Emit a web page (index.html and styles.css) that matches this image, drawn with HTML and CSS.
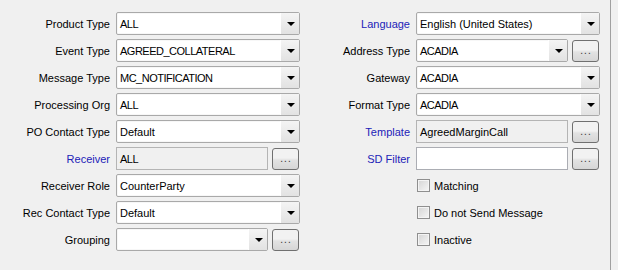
FILE: index.html
```html
<!DOCTYPE html>
<html lang="en">
<head>
    <meta charset="UTF-8">
    <title>Message Config</title>
    <link rel="stylesheet" href="styles.css">
</head>
<body>
    <div class="panel">
        <div class="form left">
            <label class="lbl">Product Type</label>
            <div class="combo"><span class="caps">ALL</span><i class="arrow"></i></div>

            <label class="lbl">Event Type</label>
            <div class="combo"><span class="caps">AGREED_COLLATERAL</span><i class="arrow"></i></div>

            <label class="lbl">Message Type</label>
            <div class="combo"><span class="caps">MC_NOTIFICATION</span><i class="arrow"></i></div>

            <label class="lbl">Processing Org</label>
            <div class="combo"><span class="caps">ALL</span><i class="arrow"></i></div>

            <label class="lbl">PO Contact Type</label>
            <div class="combo"><span>Default</span><i class="arrow"></i></div>

            <label class="lbl link">Receiver</label>
            <div class="pair">
                <div class="text ro caps">ALL</div>
                <button class="dots">...</button>
            </div>

            <label class="lbl">Receiver Role</label>
            <div class="combo"><span>CounterParty</span><i class="arrow"></i></div>

            <label class="lbl">Rec Contact Type</label>
            <div class="combo"><span>Default</span><i class="arrow"></i></div>

            <label class="lbl">Grouping</label>
            <div class="pair">
                <div class="combo"><span></span><i class="arrow"></i></div>
                <button class="dots">...</button>
            </div>
        </div>

        <div class="form right">
            <label class="lbl link">Language</label>
            <div class="combo"><span>English (United States)</span><i class="arrow"></i></div>

            <label class="lbl">Address Type</label>
            <div class="pair">
                <div class="combo"><span class="caps">ACADIA</span><i class="arrow"></i></div>
                <button class="dots">...</button>
            </div>

            <label class="lbl">Gateway</label>
            <div class="combo"><span class="caps">ACADIA</span><i class="arrow"></i></div>

            <label class="lbl">Format Type</label>
            <div class="combo"><span class="caps">ACADIA</span><i class="arrow"></i></div>

            <label class="lbl link">Template</label>
            <div class="pair">
                <div class="text ro">AgreedMarginCall</div>
                <button class="dots">...</button>
            </div>

            <label class="lbl link">SD Filter</label>
            <div class="pair">
                <div class="text"></div>
                <button class="dots">...</button>
            </div>

            <span></span>
            <div class="check"><i class="box"></i>Matching</div>

            <span></span>
            <div class="check"><i class="box"></i>Do not Send Message</div>

            <span></span>
            <div class="check"><i class="box"></i>Inactive</div>
        </div>
    </div>
</body>
</html>
```

FILE: styles.css
```css
body {
    margin: 0;
    background: #f0f0f0;
    font-family: "Liberation Sans", Arial, sans-serif;
    font-size: 11px;
    color: #000;
}

.panel {
    display: flex;
    width: 611px;
    height: 270px;
    border-right: 1px solid #a0a0a0;
    box-sizing: border-box;
}

.form {
    display: grid;
    grid-template-columns: 110px 184px;
    grid-auto-rows: 23px;
    column-gap: 6px;
    row-gap: 4px;
    padding-top: 12px;
}
.form.right {
    grid-template-columns: 100px 184px;
    margin-left: 10px;
}

.lbl {
    display: flex;
    align-items: center;
    justify-content: flex-end;
    white-space: nowrap;
}
.lbl.link {
    color: #2222b8;
}

.combo {
    display: flex;
    align-items: center;
    border: 1px solid #a9a9a9;
    border-radius: 2px;
    background: #fff;
    box-shadow: inset 0 0 0 1px #f7f7f7;
    box-sizing: border-box;
    height: 23px;
    flex: 1;
}
.combo span {
    flex: 1;
    padding-left: 3px;
    white-space: nowrap;
}
.caps {
    letter-spacing: -0.5px;
}
.arrow {
    width: 18px;
    height: 21px;
    background: linear-gradient(#f4f4f4, #e2e2e2);
    position: relative;
    border-left: 1px solid #fff;
}
.arrow::after {
    content: "";
    position: absolute;
    left: 6px;
    top: 9px;
    border-left: 4px solid transparent;
    border-right: 4px solid transparent;
    border-top: 4px solid #000;
}

.pair {
    display: flex;
    gap: 4px;
    padding-right: 1px;
}
.pair .combo,
.pair .text {
    width: 152px;
    flex: none;
}

.text {
    height: 23px;
    box-sizing: border-box;
    border: 1px solid #abadb3;
    background: #fff;
    padding-left: 3px;
    display: flex;
    align-items: center;
}
.text.ro {
    background: #f0f0f0;
    border-color: #b4b4b4;
}

.dots {
    width: 27px;
    height: 22px;
    margin-top: 1px;
    padding: 0 0 0 1px;
    border: 1px solid #707070;
    border-radius: 3px;
    background: linear-gradient(#f2f2f2 45%, #e2e2e2 55%, #d6d6d6);
    font-family: inherit;
    font-size: 10px;
    line-height: 18px;
    color: #333;
    letter-spacing: 1px;
}

.check {
    display: flex;
    align-items: center;
    gap: 4px;
    padding-left: 1px;
}
.box {
    width: 11px;
    height: 11px;
    border: 1px solid #8f8f8f;
    background: linear-gradient(135deg, #d4d4d4, #f6f6f6);
    box-shadow: inset 0 0 0 1px #f4f4f4;
}
```
